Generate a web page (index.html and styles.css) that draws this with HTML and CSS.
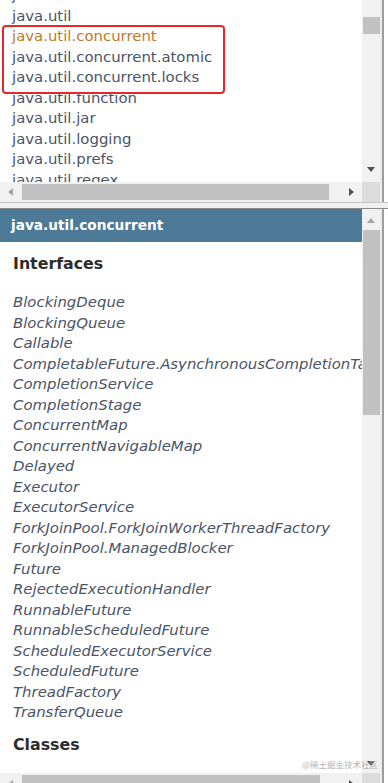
FILE: index.html
```html
<!DOCTYPE html>
<html lang="en">
<head>
    <meta charset="UTF-8" name="viewport" content="width=device-width, initial-scale=1.0">
    <title>java.util.concurrent</title>
    <link rel="stylesheet" href="styles.css">
</head>
<body>
<div class="frames">
    <!-- Top frame: package list -->
    <div class="pane pane-top">
        <div class="view">
            <ul class="pkg-list">
                <li>java.time.zone</li>
                <li>java.util</li>
                <li class="marked">
                    <ul>
                        <li class="current">java.util.concurrent</li>
                        <li>java.util.concurrent.atomic</li>
                        <li>java.util.concurrent.locks</li>
                    </ul>
                </li>
                <li>java.util.function</li>
                <li>java.util.jar</li>
                <li>java.util.logging</li>
                <li>java.util.prefs</li>
                <li>java.util.regex</li>
                <li>java.util.spi</li>
            </ul>
        </div>
        <div class="vbar">
            <span class="thumb thumb-top"></span>
            <span class="arrow arrow-down"></span>
        </div>
        <div class="edge"></div>
        <div class="hbar">
            <span class="arrow arrow-left"></span>
            <span class="thumb hthumb-top"></span>
            <span class="arrow arrow-right"></span>
        </div>
        <div class="corner"></div>
    </div>

    <div class="split"></div>

    <!-- Bottom frame: package content -->
    <div class="pane pane-bottom">
        <div class="view">
            <h1 class="pkg-title">java.util.concurrent</h1>
            <h2 class="group-title">Interfaces</h2>
            <ul class="type-list">
                <li>BlockingDeque</li>
                <li>BlockingQueue</li>
                <li>Callable</li>
                <li>CompletableFuture.AsynchronousCompletionTask</li>
                <li>CompletionService</li>
                <li>CompletionStage</li>
                <li>ConcurrentMap</li>
                <li>ConcurrentNavigableMap</li>
                <li>Delayed</li>
                <li>Executor</li>
                <li>ExecutorService</li>
                <li>ForkJoinPool.ForkJoinWorkerThreadFactory</li>
                <li>ForkJoinPool.ManagedBlocker</li>
                <li>Future</li>
                <li>RejectedExecutionHandler</li>
                <li>RunnableFuture</li>
                <li>RunnableScheduledFuture</li>
                <li>ScheduledExecutorService</li>
                <li>ScheduledFuture</li>
                <li>ThreadFactory</li>
                <li>TransferQueue</li>
            </ul>
            <h2 class="group-title classes">Classes</h2>
        </div>
        <div class="vbar">
            <span class="arrow arrow-up"></span>
            <span class="thumb thumb-bottom"></span>
            <span class="arrow arrow-down arrow-down-bottom"></span>
        </div>
        <div class="edge"></div>
        <div class="hbar hbar-bottom">
            <span class="arrow arrow-left"></span>
            <span class="thumb hthumb-bottom"></span>
            <span class="arrow arrow-right"></span>
        </div>
        <div class="corner"></div>
    </div>

    <!-- Watermark over the bottom right -->
    <span class="watermark">@稀土掘金技术社区</span>
</div>
</body>
</html>
```

FILE: styles.css
```css
* {
    padding: 0;
    margin: 0;
    box-sizing: border-box;
    font-family: "DejaVu Sans", sans-serif;
}

body {
    background: #ffffff;
}

.frames {
    position: relative;
    width: 388px;
    height: 783px;
    overflow: hidden;
}

.pane {
    display: grid;
    grid-template-columns: 362px 18px 8px;
}

.pane-top {
    grid-template-rows: 182px 20px;
}

.pane-bottom {
    grid-template-rows: 564px 10px;
}

.view {
    overflow: hidden;
    background: #ffffff;
}

/* Package list */
.pkg-list {
    list-style: none;
    margin-top: -15px;
    font-size: 14.9px;
    line-height: 20.5px;
    color: #4a5466;
}

.pkg-list li {
    padding-left: 12px;
    white-space: nowrap;
}

.pkg-list ul {
    list-style: none;
}

.pkg-list .marked {
    position: relative;
    padding-left: 0;
}

.pkg-list .marked::after {
    content: "";
    position: absolute;
    top: -1px;
    left: 2px;
    width: 219px;
    height: 65px;
    border: 2px solid #e8262a;
    border-radius: 4px;
}

.pkg-list .current {
    color: #bb7a2a;
}

/* Scrollbars */
.vbar {
    display: flex;
    flex-direction: column;
    background: #f1f1f1;
}

.hbar {
    display: flex;
    align-items: center;
    background: #f1f1f1;
    overflow: hidden;
}

.corner {
    background: #dcdcdc;
}

.edge {
    grid-row: span 2;
    grid-column: 3;
    background: linear-gradient(
            to right,
            #ececec 0 2px,
            #9c9c9c 2px 4px,
            #ffffff 4px
    );
}

.thumb {
    display: block;
    background: #c1c1c1;
}

.vbar .thumb {
    width: 17px;
    margin-left: 1px;
}

.thumb-top {
    margin-top: 17px;
    height: 17px;
}

.thumb-bottom {
    margin-top: 7px;
    height: 185px;
}

.hthumb-top {
    width: 307px;
    height: 16px;
    margin-left: 9px;
}

.hthumb-bottom {
    width: 298px;
    height: 16px;
    margin-left: 9px;
    align-self: flex-start;
    margin-top: 2px;
}

.arrow {
    display: block;
    width: 0;
    height: 0;
}

.arrow-down {
    align-self: center;
    margin-top: auto;
    margin-bottom: 10px;
    border-left: 4px solid transparent;
    border-right: 4px solid transparent;
    border-top: 5px solid #505050;
}

.arrow-down-bottom {
    margin-bottom: 7px;
}

.arrow-up {
    align-self: center;
    margin-top: 9px;
    border-left: 4px solid transparent;
    border-right: 4px solid transparent;
    border-bottom: 5px solid #a3a3a3;
}

.arrow-left {
    margin-left: 8px;
    border-top: 4px solid transparent;
    border-bottom: 4px solid transparent;
    border-right: 5px solid #a3a3a3;
}

.arrow-right {
    margin-left: 20px;
    border-top: 4px solid transparent;
    border-bottom: 4px solid transparent;
    border-left: 5px solid #505050;
}

.hbar-bottom .arrow {
    align-self: flex-start;
    margin-top: 7px;
}

.hbar-bottom .arrow-right {
    margin-left: 29px;
}

/* Frame divider */
.split {
    height: 7px;
    background: #f0f0f0;
    border-top: 1px solid #c6c6c6;
    border-bottom: 1px solid #8a8a8a;
}

/* Package content */
.pkg-title {
    height: 33px;
    padding-left: 11px;
    background-color: #4d7a97;
    color: #ffffff;
    font-size: 13.7px;
    font-weight: bold;
    line-height: 33px;
    white-space: nowrap;
}

.group-title {
    margin: 12px 0 0 13px;
    font-size: 15.8px;
    font-weight: bold;
    line-height: 20px;
    color: #2c2c2c;
}

.group-title.classes {
    margin-top: 12px;
}

.type-list {
    list-style: none;
    margin-top: 18px;
    font-size: 14.9px;
    font-style: italic;
    line-height: 20.5px;
    color: #4a5466;
}

.type-list li {
    padding-left: 13px;
    white-space: nowrap;
}

.watermark {
    position: absolute;
    right: 10px;
    bottom: 14px;
    font-family: "Noto Sans CJK SC", sans-serif;
    font-size: 8.5px;
    line-height: 10px;
    color: #b4b4b4;
}
```
